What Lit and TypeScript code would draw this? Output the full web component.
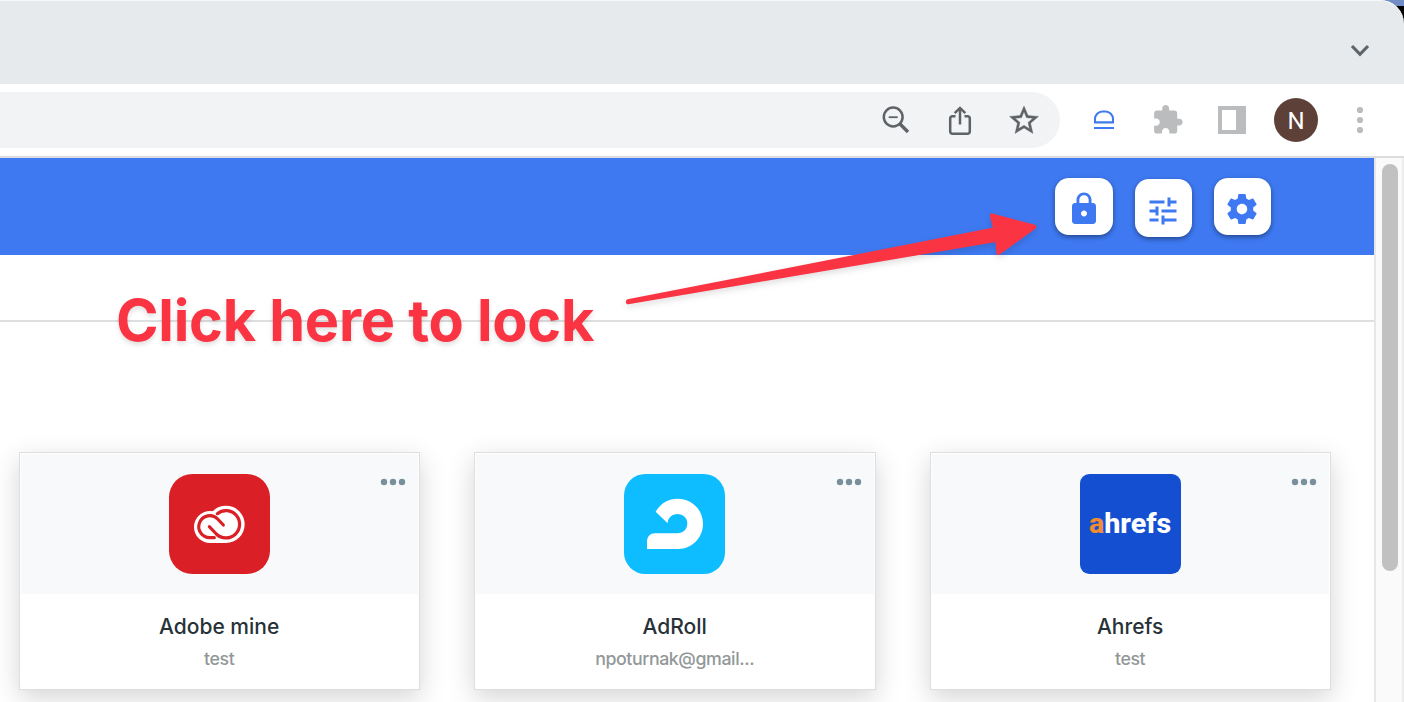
import { LitElement, html, css, svg } from "lit";
import { customElement, property } from "lit/decorators.js";

const adobeLogo = html`<svg class="logo" viewBox="0 0 303 300" preserveAspectRatio="none">
  <rect width="303" height="300" rx="70" fill="#da1f26" />
  <g fill="#fff"><circle cx="171" cy="151" r="56" /><circle cx="123" cy="159" r="48" /><path d="M123 160h50v47h-50z" /></g>
  <g fill="none" stroke="#da1f26" stroke-width="9.5" stroke-linecap="round" stroke-linejoin="round">
    <path d="M145 119A41 41 0 1 1 142 180L121 158" />
    <path d="M136 191H123A33 33 0 1 1 146 135L163 153" />
  </g>
</svg>`;

const adrollLogo = html`<svg class="logo" viewBox="0 0 303 300" preserveAspectRatio="none">
  <rect width="303" height="300" rx="64" fill="#0ebdff" />
  <path fill="#fff" d="M95 113C110 88 132 74 160 74C204 74 237 107 237 150C237 192 203 225 163 225H69V203C69 188 79 178 93 178H160C178 178 190 165 190 148C190 132 177 120 160 120C144 120 131 132 131 148Z" />
</svg>`;

const ahrefsLogo = html`<svg class="logo" viewBox="0 0 303 300" preserveAspectRatio="none">
  <rect width="303" height="300" rx="28" fill="#144fd2" />
  <text x="27" y="177" textLength="247" lengthAdjust="spacingAndGlyphs" class="wordmark"><tspan fill="#f08c32">a</tspan><tspan fill="#fff">hrefs</tspan></text>
</svg>`;

@customElement("account-card")
class AccountCard extends LitElement {
  @property() name = "";
  @property() login = "";
  @property({ attribute: false }) logo: unknown;

  static styles = css`
    :host {
      display: flex;
      flex-direction: column;
      box-sizing: border-box;
      height: 238px;
      padding: 1px;
      border: 1px solid #dcdedf;
      background: #fff;
      box-shadow: 0 8px 25px rgba(0, 0, 0, 0.17);
      text-align: center;
      font-family: Inter, "Liberation Sans", sans-serif;
    }
    .head {
      display: grid;
      grid-template-columns: 148px 101px 1fr;
      height: 120px;
      padding-top: 20px;
      background: #f7f9fb;
    }
    .logo { grid-column: 2; width: 101px; height: 100px; display: block; margin-left: -0.4px; }
    .wordmark { font: 800 84px Roboto, sans-serif; }
    .more { justify-self: end; width: 26px; height: 8px; margin: 4px 12.2px 0 0; fill: #78909c; }
    .name { margin: 19px 1px 0 0; font-size: 21px; line-height: 28px; font-weight: 500; color: #263238; }
    .login { margin: 6px 1px 0 0; font-size: 17.8px; line-height: 24px; font-weight: 500; letter-spacing: -0.42px; color: #929899; }
  `;

  render() {
    return html`
      <div class="head">
        ${this.logo}
        <svg class="more" viewBox="0 0 26 8"><circle cx="4" cy="4" r="3.2" /><circle cx="13" cy="4" r="3.2" /><circle cx="22" cy="4" r="3.2" /></svg>
      </div>
      <div class="name">${this.name}</div>
      <div class="login">${this.login}</div>
    `;
  }
}

const lockPath = svg`<path d="M18 8h-1V6c0-2.76-2.24-5-5-5S7 3.24 7 6v2H6c-1.1 0-2 .9-2 2v10c0 1.1.9 2 2 2h12c1.1 0 2-.9 2-2V10c0-1.1-.9-2-2-2zm-6 9c-1.1 0-2-.9-2-2s.9-2 2-2 2 .9 2 2-.9 2-2 2zm3.1-9H8.9V6c0-1.71 1.39-3.1 3.1-3.1 1.71 0 3.1 1.39 3.1 3.1v2z"/>`;
const tunePath = svg`<path d="M3 17v2h6v-2H3zM3 5v2h10V5H3zm10 16v-2h8v-2h-8v-2h-2v6h2zM7 9v2H3v2h4v2h2V9H7zm14 4v-2H11v2h10zm-6-4h2V7h4V5h-4V3h-2v6z"/>`;
const gearPath = svg`<path d="M19.43 12.98c.04-.32.07-.64.07-.98s-.03-.66-.07-.98l2.11-1.65c.19-.15.24-.42.12-.64l-2-3.46c-.12-.22-.39-.3-.61-.22l-2.49 1c-.52-.4-1.08-.73-1.69-.98l-.38-2.65C14.46 2.18 14.25 2 14 2h-4c-.25 0-.46.18-.49.42l-.38 2.65c-.61.25-1.17.59-1.69.98l-2.49-1c-.23-.09-.49 0-.61.22l-2 3.46c-.13.22-.07.49.12.64l2.11 1.65c-.04.32-.07.65-.07.98s.03.66.07.98l-2.11 1.65c-.19.15-.24.42-.12.64l2 3.46c.12.22.39.3.61.22l2.49-1c.52.4 1.08.73 1.69.98l.38 2.65c.03.24.24.42.49.42h4c.25 0 .46-.18.49-.42l.38-2.65c.61-.25 1.17-.59 1.69-.98l2.49 1c.23.09.49 0 .61-.22l2-3.46c.12-.22.07-.49-.12-.64l-2.11-1.65zM12 15.5c-1.93 0-3.5-1.57-3.5-3.5s1.57-3.5 3.5-3.5 3.5 1.57 3.5 3.5-1.57 3.5-3.5 3.5z"/>`;

@customElement("app-root")
class AppRoot extends LitElement {
  static styles = css`
    :host {
      display: flex;
      flex-direction: column;
      position: relative;
      width: 1404px;
      height: 702px;
      overflow: hidden;
      background: #fff;
      font-family: Inter, "Liberation Sans", sans-serif;
    }
    .desktop { flex: none; height: 84px; background: linear-gradient(#6f8cc4 0 6px, #000 6px); }
    .tabs {
      display: flex;
      justify-content: flex-end;
      box-sizing: border-box;
      height: 84px;
      padding: 18px 12px 0 0;
      border-radius: 0 24px 0 0;
      background: #e6eaed;
      box-shadow: inset 0 1px 0 #f6f8f9;
    }
    .toolbar {
      flex: none;
      display: flex;
      align-items: center;
      box-sizing: border-box;
      height: 74px;
      padding-right: 12px;
      border-bottom: 2px solid #dadcdd;
    }
    .omnibox {
      display: flex;
      justify-content: flex-end;
      align-items: center;
      box-sizing: border-box;
      width: 1060px;
      height: 56px;
      padding-right: 4px;
      margin-right: 12px;
      border-radius: 0 28px 28px 0;
      background: #f1f3f4;
    }
    .ic { flex: none; display: block; width: 64px; height: 64px; fill: none; }
    .cell { width: 64px; display: flex; justify-content: center; }
    .avatar {
      width: 44px;
      height: 44px;
      border-radius: 50%;
      background: #5d4037;
      color: #fff;
      font: 400 24px/46px Roboto, sans-serif;
      text-align: center;
    }
    .viewport { flex: 1; display: flex; min-height: 0; }
    .page { width: 1374px; overflow: hidden; }
    .banner {
      display: flex;
      justify-content: flex-end;
      align-items: flex-start;
      gap: 22px;
      box-sizing: border-box;
      height: 97px;
      padding: 20px 103px 0 0;
      background: #3e79f1;
    }
    .btn {
      display: flex;
      justify-content: center;
      align-items: center;
      box-sizing: border-box;
      width: 57px;
      height: 57.4px;
      padding: 5px 1px 0 0;
      border-radius: 14px;
      background: #fff;
      box-shadow: 0 2px 5px rgba(0, 0, 0, 0.42);
    }
    .btn.wide { width: 58px; padding-right: 0; }
    .btn.low { margin-top: 1.3px; padding-top: 7px; }
    .btn svg { width: 36px; height: 36px; fill: #3e79f1; }
    .strip { height: 65px; border-bottom: 2px solid #dedfe0; }
    .cards {
      display: grid;
      grid-template-columns: repeat(3, 401.3px);
      column-gap: 54.2px;
      padding: 130px 0 0 19px;
    }
    .scroll {
      display: flex;
      justify-content: center;
      flex: 1;
      padding-top: 6px;
      border-left: 2px solid #e7e7e7;
      border-right: 2px solid #ededed;
      background: #fafafa;
    }
    .thumb { width: 16px; height: 407px; margin-left: 2px; border-radius: 8px; background: #c1c1c1; }
    .note {
      position: absolute;
      left: 116px;
      top: 285px;
      font-size: 57.6px;
      line-height: 70px;
      font-weight: 700;
      letter-spacing: -0.25px;
      white-space: nowrap;
      color: #fa3442;
      text-shadow: 0 3px 5px rgba(0, 0, 0, 0.13);
    }
    .arrow {
      position: absolute;
      left: 610px;
      top: 200px;
      filter: drop-shadow(0 3px 3px rgba(0, 0, 0, 0.13));
    }
  `;

  render() {
    return html`
      <div class="desktop">
        <div class="tabs">
          <svg class="ic" viewBox="0 0 64 64"><path d="M24 28l8 8.3 8-8.3" stroke="#5f6468" stroke-width="3.2" /></svg>
        </div>
      </div>
      <div class="toolbar">
        <div class="omnibox">
          <svg class="ic" viewBox="0 0 64 64" stroke="#5f6368">
            <circle cx="29.2" cy="29" r="9.4" stroke-width="2.5" />
            <path d="M24.7 29.2h9" stroke-width="1.8" /><path d="M36 36l8 8" stroke-width="3.4" />
          </svg>
          <svg class="ic" viewBox="0 0 64 64" stroke="#5f6368" stroke-width="2.5">
            <path d="M27.5 28.3h-2.8a2.5 2.5 0 0 0-2.5 2.5v12.4a2.5 2.5 0 0 0 2.5 2.5h14.6a2.5 2.5 0 0 0 2.5-2.5V30.8a2.5 2.5 0 0 0-2.5-2.5h-2.8M32 36.5V20.5M26.7 25.2L32 19.9l5.3 5.3" />
          </svg>
          <svg class="ic" viewBox="0 0 64 64"><path fill="#5f6368" stroke="#5f6368" stroke-width=".25" transform="translate(14.6 15) scale(1.45)" d="M22 9.24l-7.19-.62L12 2 9.19 8.63 2 9.24l5.46 4.73L5.82 21 12 17.27 18.18 21l-1.63-7.03L22 9.24zM12 15.4l-3.76 2.27 1-4.28-3.32-2.88 4.38-.38L12 6.1l1.71 4.04 4.38.38-3.32 2.88 1 4.28L12 15.4z" /></svg>
        </div>
        <svg class="ic" viewBox="0 0 64 64" stroke="#3e79f1" stroke-width="2.1">
          <path d="M23 34.4v-3.400a7.5 7.5 0 0 1 7.5-7.5h3a7.5 7.5 0 0 1 7.5 7.5v3.400zM22 40h20" />
        </svg>
        <svg class="ic" viewBox="0 0 64 64"><path fill="#babcbe" transform="translate(15.4 15.7) scale(1.36)" d="M20.5 11H19V7c0-1.1-.9-2-2-2h-4V3.5C13 2.12 11.88 1 10.5 1S8 2.12 8 3.5V5H4c-1.1 0-1.99.9-1.99 2v3.8H3.5c1.49 0 2.7 1.21 2.7 2.7s-1.21 2.7-2.7 2.7H2V20c0 1.1.9 2 2 2h3.8v-1.5c0-1.49 1.21-2.7 2.7-2.7 1.49 0 2.7 1.21 2.7 2.7V22H17c1.1 0 2-.9 2-2v-4h1.5c1.38 0 2.5-1.12 2.5-2.5S21.88 11 20.5 11z" /></svg>
        <svg class="ic" viewBox="0 0 64 64"><path fill="#babcbe" fill-rule="evenodd" d="M18 18h28v28H18zM22 22v20h14V22z" /></svg>
        <div class="cell"><div class="avatar">N</div></div>
        <svg class="ic" viewBox="0 0 64 64"><g fill="#babcbe"><circle cx="32" cy="22" r="3.1" /><circle cx="32" cy="32" r="3.1" /><circle cx="32" cy="42" r="3.1" /></g></svg>
      </div>
      <div class="viewport">
        <div class="page">
          <div class="banner">
            <div class="btn wide"><svg viewBox="0 0 24 24">${lockPath}</svg></div>
            <div class="btn low"><svg viewBox="0 0 24 24">${tunePath}</svg></div>
            <div class="btn"><svg viewBox="0 0 24 24">${gearPath}</svg></div>
          </div>
          <div class="strip"></div>
          <div class="cards">
            <account-card .name=${"Adobe mine"} .login=${"test"} .logo=${adobeLogo}></account-card>
            <account-card .name=${"AdRoll"} .login=${"npoturnak@gmail..."} .logo=${adrollLogo}></account-card>
            <account-card .name=${"Ahrefs"} .login=${"test"} .logo=${ahrefsLogo}></account-card>
          </div>
        </div>
        <div class="scroll"><div class="thumb"></div></div>
      </div>
      <div class="note">Click here to lock</div>
      <svg class="arrow" width="440" height="115" viewBox="0 0 440 115">
        <path fill="#fa3442" stroke="#fa3442" stroke-width="4" stroke-linejoin="round" d="M18 101.3L385.3 29.3L381.8 15.5L424.5 26.8L388.5 53L387.3 39.8L18 102.3Z" />
      </svg>
    `;
  }
}
